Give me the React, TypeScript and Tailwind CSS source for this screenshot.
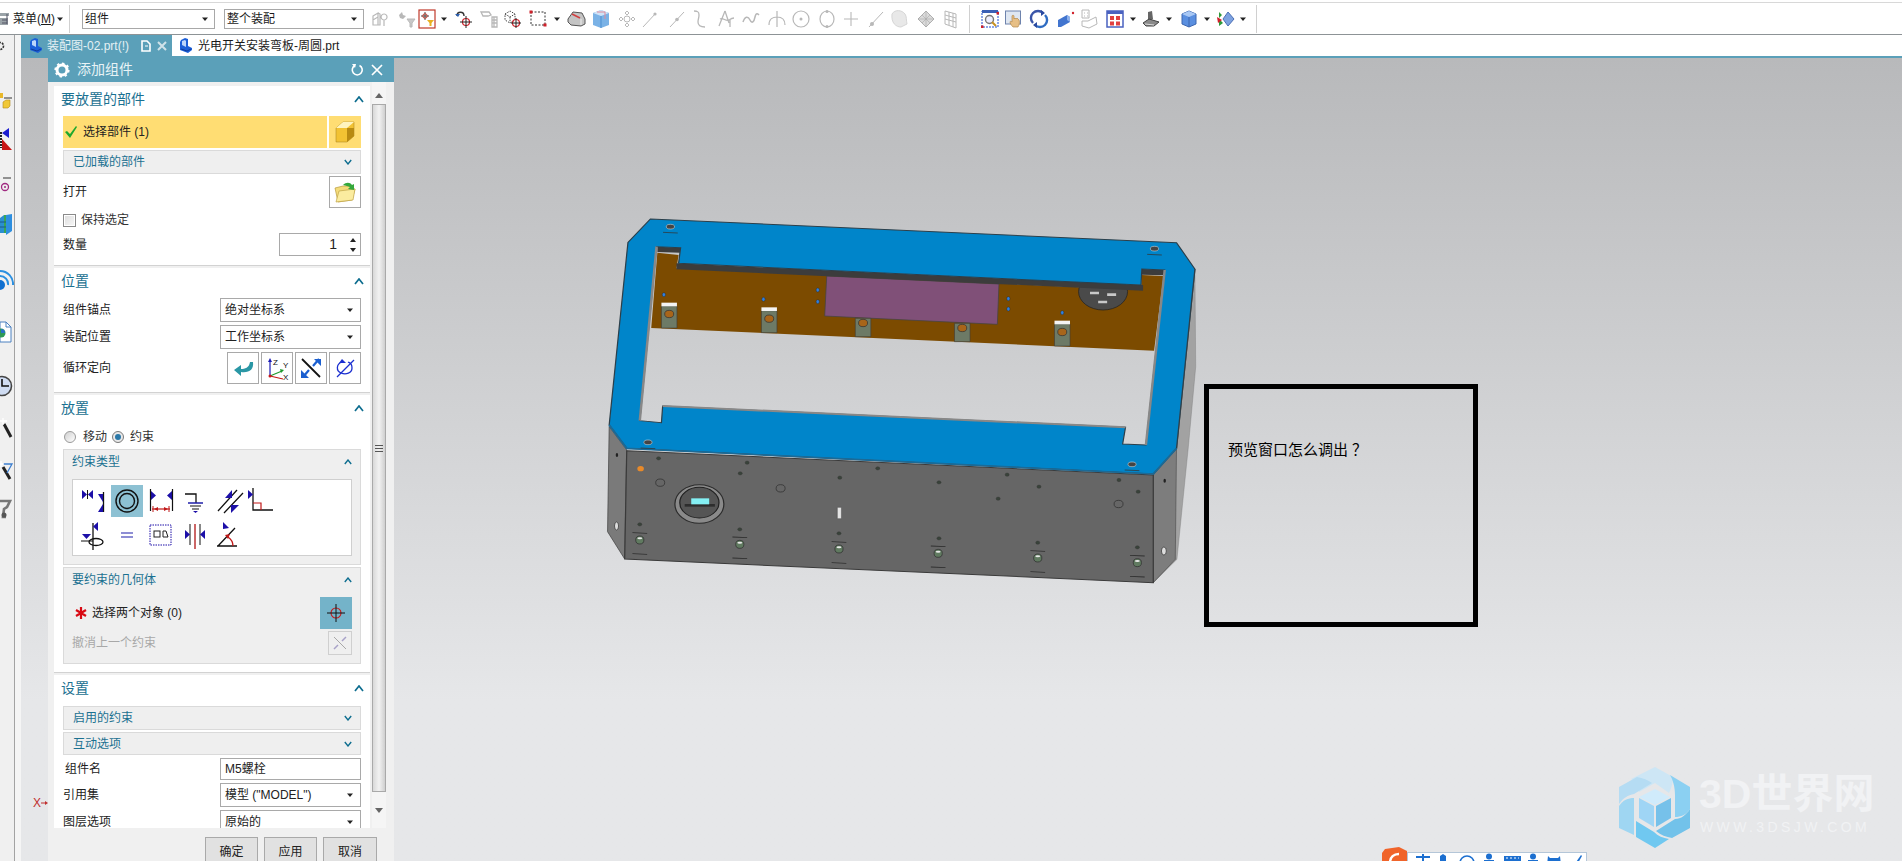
import React from "react";

const G = "#b8b8b8";
const NAVY = "#1c0fa8";

function Ic({ c, children }: { c: string; children: React.ReactNode }) {
  return (
    <svg viewBox="0 0 20 20" className={`w-[20px] h-[20px] shrink-0 ${c}`} fill="none">
      {children}
    </svg>
  );
}

function Drop({ c }: { c: string }) {
  return (
    <svg viewBox="0 0 8 8" className={`w-[8px] h-[8px] shrink-0 ${c}`}>
      <path d="M1 2.5h6L4 6z" fill="#222" />
    </svg>
  );
}

function Sep({ c }: { c: string }) {
  return <div className={`w-px h-[28px] bg-[#d0d0d0] shrink-0 ${c}`} />;
}

function Toolbar() {
  return (
    <div className="h-[32px] flex items-center border-b border-[#8d9396] shrink-0 bg-white">
      <svg viewBox="0 0 10 16" className="w-[10px] h-[16px] shrink-0">
        <path d="M0 2h9v3H0zM0 7h8v7H0z" fill="#9aa3a8" />
        <path d="M2 9h5M2 12h5M7 3v10" stroke="#556" strokeWidth="1" />
      </svg>
      <span className="ml-[3px] text-[12px] text-[#1a1a1a] w-[43px] whitespace-nowrap">
        菜单(<span className="underline">M</span>)
      </span>
      <Drop c="ml-[0px]" />
      <Sep c="ml-[5px]" />
      <div className="ml-[12px] w-[133px] h-[20px] border border-[#a8a8a8] flex items-center justify-between pl-[2px] pr-[5px] text-[12px] text-[#1a1a1a]">
        组件
        <Drop c="" />
      </div>
      <div className="ml-[9px] w-[140px] h-[20px] border border-[#a8a8a8] flex items-center justify-between pl-[2px] pr-[5px] text-[12px] text-[#1a1a1a]">
        整个装配
        <Drop c="" />
      </div>
      <Ic c="ml-[6px]">
        <path d="M3 7l5-3v4l-5 3zM3 7v9h5V8M8 4l2 1v11H8M14 5a3 3 0 1 0 .1 0zM14 11v6" stroke={G} strokeWidth="1.2" />
      </Ic>
      <Ic c="ml-[7px]">
        <path d="M2 6l3-3 1 3 3 1-3 3-3-1z" fill={G} />
        <path d="M10 10h8l-3 4v4h-2v-4z" fill="#c8c8c8" stroke={G} />
      </Ic>
      <Ic c="">
        <rect x="2" y="1" width="16" height="18" stroke="#c0392b" strokeWidth="1.2" fill="#fff" />
        <path d="M8 3v8M4 7h8" stroke="#444" />
        <circle cx="8" cy="7" r="2.2" stroke="#c0392b" />
        <path d="M10 11h7l-2.5 3v3h-2v-3z" fill="#e8b021" />
      </Ic>
      <Drop c="ml-[3px]" />
      <Ic c="ml-[6px]">
        <path d="M3 7c0-5 7-5 7 0" stroke="#333" strokeWidth="1.4" />
        <path d="M1 5l3 3 2-3z" fill="#2b5fb0" />
        <circle cx="12" cy="13" r="3.5" stroke="#d0202a" strokeWidth="1.2" />
        <path d="M12 7v12M6 13h12" stroke="#222" />
      </Ic>
      <Ic c="ml-[5px]">
        <path d="M2 3h8l2 3-3 1H4zM13 8h5v10h-5zM13 11h5M13 14h5M15 8v10" stroke={G} strokeWidth="1.3" />
      </Ic>
      <Ic c="ml-[4px]">
        <path d="M2 5l5-3 5 3v6l-5 3-5-3zM2 5l5 3 5-3M7 8v6" stroke="#444" strokeDasharray="1.5 1.2" />
        <circle cx="13" cy="14" r="3.5" stroke="#d0202a" strokeWidth="1.2" />
        <path d="M13 9v10M8 14h10" stroke="#222" />
      </Ic>
      <Ic c="ml-[5px]">
        <rect x="3" y="3" width="14" height="13" stroke="#333" strokeDasharray="2 1.5" />
        <rect x="1.5" y="1.5" width="3" height="3" fill="#d0202a" />
        <rect x="15.5" y="14.5" width="3" height="3" fill="#d0202a" />
      </Ic>
      <Drop c="ml-[5px]" />
      <Ic c="ml-[5px]">
        <path d="M2 10l5-7 9 1 3 6v5l-4 2-10-1-3-3z" fill="#c4c4c4" stroke="#555" />
        <path d="M6 5l8 4" stroke="#d04040" strokeWidth="1.6" />
        <path d="M15 10v6" stroke="#eee" />
      </Ic>
      <Ic c="ml-[5px]">
        <path d="M10 1l8 3v12l-8 3-8-3V4z" fill="#7ab2e6" />
        <path d="M10 1l8 3-8 3-8-3z" fill="#cfe3f7" />
        <path d="M10 7v12" stroke="#4d8fd0" />
        <path d="M6 3l8 0 0 7" stroke="#e08a9a" />
      </Ic>
      <Ic c="ml-[6px]">
        <path d="M10 2l2 2-2 2-2-2zM10 14l2 2-2 2-2-2zM2 10l2-2 2 2-2 2zM14 10l2-2 2 2-2 2z" stroke={G} />
        <circle cx="10" cy="10" r="3" stroke={G} />
      </Ic>
      <Ic c="ml-[3px]">
        <path d="M3 18L16 4" stroke={G} />
        <circle cx="15" cy="5" r="1.6" fill={G} />
      </Ic>
      <Ic c="ml-[7px]">
        <path d="M3 18L17 3" stroke={G} />
        <circle cx="10" cy="10.5" r="1.8" fill={G} />
      </Ic>
      <Ic c="ml-[3px]">
        <path d="M4 2c4 0 5 1 5 4s-1 4-1 7 2 5 7 5" stroke={G} strokeWidth="1.3" />
      </Ic>
      <Ic c="ml-[6px]">
        <path d="M9 2L3 17M9 2l4 12M4 10c3-2 6 3 9 1s3-2 5-2M14 10v8" stroke={G} strokeWidth="1.3" />
      </Ic>
      <Ic c="ml-[5px]">
        <path d="M2 13c2-6 5-6 7-2s4 2 5-3 3-3 4-2" stroke={G} strokeWidth="1.5" />
      </Ic>
      <Ic c="ml-[6px]">
        <path d="M10 2v16M2 16c0-6 4-8 8-8s8 2 8 8" stroke={G} strokeWidth="1.2" />
      </Ic>
      <Ic c="ml-[4px]">
        <circle cx="10" cy="10" r="8" stroke={G} strokeWidth="1.2" />
        <circle cx="10" cy="10" r="1.5" fill={G} />
      </Ic>
      <Ic c="ml-[6px]">
        <ellipse cx="10" cy="10" rx="7" ry="8" stroke={G} strokeWidth="1.2" />
        <circle cx="10" cy="2.5" r="1.5" fill={G} />
        <circle cx="10" cy="17.5" r="1.5" fill={G} />
      </Ic>
      <Ic c="ml-[4px]">
        <path d="M10 3v14M3 10h14" stroke={G} strokeWidth="1.1" />
      </Ic>
      <Ic c="ml-[5px]">
        <path d="M3 18L17 3" stroke={G} />
        <circle cx="6" cy="15" r="2" fill={G} />
      </Ic>
      <Ic c="ml-[3px]">
        <path d="M3 5c3-5 10-4 13 0 2 3 1 6 2 10l-6 3C7 18 2 14 3 5z" fill="#e8e8e8" stroke="#d6d6d6" />
      </Ic>
      <Ic c="ml-[7px]">
        <path d="M10 2l8 8-8 8-8-8z" fill="#dadada" stroke="#b0b0b0" />
        <path d="M6 6l8 8M14 6l-8 8M10 2v16M2 10h16" stroke="#aaa" strokeWidth=".6" />
      </Ic>
      <Ic c="ml-[4px]">
        <path d="M5 2l11 3v14L5 15zM5 6l11 3M5 10l11 3M9 3v13M13 4v14" stroke={G} />
      </Ic>
      <Sep c="ml-[9px]" />
      <Ic c="ml-[10px]">
        <rect x="2" y="2" width="16" height="16" stroke="#1f4fd0" strokeDasharray="2 1" />
        <rect x="2" y="1" width="16" height="3" fill="#3a5fb5" />
        <circle cx="9.5" cy="10.5" r="4" stroke="#777" strokeWidth="1.4" fill="#eef" />
        <path d="M12 13l4 4" stroke="#c89020" strokeWidth="2" />
        <rect x="16.5" y="3" width="2.5" height="2.5" fill="#d0202a" />
        <rect x="1" y="16.5" width="2.5" height="2.5" fill="#d0202a" />
      </Ic>
      <Ic c="ml-[4px]">
        <rect x="1.5" y="2" width="15" height="13" fill="#dfe7f2" stroke="#6e83ad" />
        <path d="M9 18c-2-2-3-4-3-5s1-1 2 0V7c0-1 2-1 2 0v3l1-1 1 1 1-1 1 1 1 1c1 3 0 5-1 7z" fill="#e7bf85" stroke="#b58a4d" strokeWidth=".7" />
      </Ic>
      <Ic c="ml-[5px]">
        <path d="M4 14A7 7 0 0 1 14 4" stroke="#3a55a8" strokeWidth="2.4" />
        <path d="M16 6a7 7 0 0 1-10 10" stroke="#2f6cc2" strokeWidth="2.4" />
        <path d="M12 1l4 3-4 3zM8 19l-4-3 4-3z" fill="#2a4aa0" />
      </Ic>
      <Ic c="ml-[7px]">
        <path d="M2 11l9-5 3 2v5l-9 5H2z" fill="#4275cf" />
        <path d="M11 6l3 2v5l-3-2z" fill="#8db0ea" />
        <circle cx="17" cy="4" r="1.2" fill="#d0202a" />
      </Ic>
      <Ic c="ml-[3px]">
        <path d="M3 1h7v8H3zM9 12l8-4 1 7-8 4-7-2v-5zM5 4h1M8 4h1M5 7h1M8 7h1" stroke={G} />
      </Ic>
      <Ic c="ml-[6px]">
        <rect x="2" y="2" width="16" height="16" fill="#fff" stroke="#4a62c0" strokeWidth="1.5" />
        <rect x="2" y="2" width="16" height="3" fill="#4a62c0" />
        <rect x="5" y="7" width="4" height="4" fill="#e04040" />
        <rect x="11" y="7" width="4" height="4" fill="#e04040" />
        <rect x="5" y="12.5" width="4" height="4" fill="#e04040" />
        <rect x="11" y="12.5" width="4" height="4" fill="#e04040" />
      </Ic>
      <Drop c="ml-[4px]" />
      <Ic c="ml-[4px]">
        <path d="M7 3l4-1 1 8-5 3z" fill="#666" />
        <path d="M2 14l6-4 10 3-5 4H5z" fill="#8a8a8a" stroke="#444" />
        <path d="M4 15l9 1" stroke="#ddd" />
      </Ic>
      <Drop c="ml-[4px]" />
      <Ic c="ml-[6px]">
        <path d="M10 2l7 3v10l-7 3-7-3V5z" fill="#5a8fe0" stroke="#3c66b0" />
        <path d="M3 5l7 3 7-3-7-3z" fill="#a9c8f4" />
        <path d="M10 8v10" stroke="#3c66b0" />
      </Ic>
      <Drop c="ml-[4px]" />
      <Ic c="ml-[4px]">
        <path d="M4 3v6l3-3zM4 10v7l4-3z" fill="#2d9a3a" />
        <path d="M2 8l5 3-4 3z" fill="#d0202a" />
        <path d="M13 3l6 7-6 7-5-7z" fill="#7da2e0" stroke="#4b6fb5" />
      </Ic>
      <Drop c="ml-[4px]" />
      <Sep c="ml-[9px]" />
    </div>
  );
}

function LeftStrip() {
  return (
    <div className="w-[21px] shrink-0 flex bg-[#f5f5f5]">
      <div className="w-[14px] bg-[#f0f0f0] flex flex-col overflow-hidden">
        <svg viewBox="0 0 14 24" className="w-[14px] h-[24px] shrink-0 -mt-[1px]">
          <circle cx="0" cy="12" r="3.5" fill="none" stroke="#333" strokeWidth="1.6" strokeDasharray="2 1" />
        </svg>
        <svg viewBox="0 0 14 24" className="w-[14px] h-[24px] shrink-0 mt-[33px]">
          <path d="M0 2h3v5H0z" fill="#e8b82a" />
          <path d="M4 7h8" stroke="#333" />
          <path d="M3 11l3-2h4v6l-2 2H3z" fill="#f0c838" stroke="#b38b1c" strokeWidth=".6" />
        </svg>
        <svg viewBox="0 0 14 24" className="w-[14px] h-[24px] shrink-0 mt-[12px]">
          <path d="M9 1v10L2 6z" fill="#1c1cd0" />
          <path d="M2 12v11h10z" fill="#c81414" />
          <path d="M1 5v16" stroke="#222" strokeDasharray="2 1" strokeWidth="2" />
        </svg>
        <svg viewBox="0 0 14 24" className="w-[14px] h-[24px] shrink-0 mt-[19px]">
          <path d="M3 8h8" stroke="#333" />
          <circle cx="5" cy="17" r="3.5" fill="none" stroke="#a02a80" strokeWidth="1.3" />
          <circle cx="5" cy="17" r="1" fill="#a02a80" />
        </svg>
        <svg viewBox="0 0 14 24" className="w-[14px] h-[24px] shrink-0 mt-[19px]">
          <path d="M0 5l4-3v18H0z" fill="#2b8fd0" />
          <path d="M4 2h2v18H4z" fill="#3aa655" />
          <path d="M6 2l6-1v17l-6 4z" fill="#2e8fe0" />
          <path d="M0 9h6M0 14h6" stroke="#1b5a8a" />
        </svg>
        <svg viewBox="0 0 14 24" className="w-[14px] h-[24px] shrink-0 mt-[30px]">
          <path d="M0 4a13 13 0 0 1 13 14" fill="none" stroke="#2a8fe0" strokeWidth="2" />
          <path d="M0 9a8 8 0 0 1 8 9" fill="none" stroke="#2a8fe0" strokeWidth="2" />
          <circle cx="0" cy="18" r="5" fill="#1070d0" />
        </svg>
        <svg viewBox="0 0 14 24" className="w-[14px] h-[24px] shrink-0 mt-[29px]">
          <path d="M0 2h6l5 5v15H0z" fill="#fff" stroke="#4a80c0" />
          <path d="M6 2v5h5" fill="none" stroke="#4a80c0" />
          <circle cx="1" cy="13" r="4.5" fill="#2f9a55" />
          <path d="M1 9a4 4 0 0 1 4 4H1z" fill="#2a70c8" />
        </svg>
        <svg viewBox="0 0 14 24" className="w-[14px] h-[24px] shrink-0 mt-[30px]">
          <circle cx="2" cy="12" r="9.5" fill="#cfdcf2" stroke="#444" strokeWidth="1.6" />
          <path d="M2 5v7h7" fill="none" stroke="#111" strokeWidth="1.6" />
        </svg>
        <svg viewBox="0 0 14 24" className="w-[14px] h-[24px] shrink-0 mt-[18px]">
          <path d="M4 8l7 13" stroke="#222" strokeWidth="3" />
          <path d="M3 2v7M0 5h7" stroke="#fff" strokeWidth="1.3" />
        </svg>
        <svg viewBox="0 0 14 24" className="w-[14px] h-[24px] shrink-0 mt-[18px]">
          <path d="M3 9l7 12" stroke="#222" strokeWidth="3" />
          <path d="M3 6h9l-5 9" fill="none" stroke="#3c7fd0" strokeWidth="1.3" />
          <path d="M1 3v6M0 6h4" stroke="#fff" strokeWidth="1.3" />
        </svg>
        <svg viewBox="0 0 14 24" className="w-[14px] h-[24px] shrink-0 mt-[15px]">
          <path d="M0 4l10 0-3 6-3 2-1 8 3 0" fill="none" stroke="#777" strokeWidth="2.6" />
          <circle cx="4" cy="18" r="2.500" fill="#555" />
        </svg>
      </div>
      <div className="w-px bg-[#a3a3a3]" />
    </div>
  );
}

function NxMark({ c }: { c: string }) {
  return (
    <svg viewBox="0 0 14 15" className={`w-[14px] h-[15px] shrink-0 ${c}`}>
      <path d="M2 2l4-2 3 1v7l4 2v2l-4 3-8-3V4z" fill="#1c5fd8" />
      <path d="M3 3l3-1 1 1v6l-4-2z" fill="#bcd6fb" />
      <path d="M2 11l6 2 4-2" fill="none" stroke="#0f3c9a" />
    </svg>
  );
}

function Tabs() {
  return (
    <div className="h-[23px] shrink-0 bg-white flex flex-col">
      <div className="h-[21px] flex items-center text-[12px] whitespace-nowrap">
        <div className="w-[151px] h-full bg-[#5ba0b9] flex items-center text-[#e4f0f4]">
          <NxMark c="ml-[8px]" />
          <span className="ml-[4px] w-[90px]">装配图-02.prt(!)</span>
          <svg viewBox="0 0 12 12" className="w-[12px] h-[12px] ml-[3px]">
            <path d="M2 1h5l3 3v7H2z" fill="none" stroke="#fff" strokeWidth="1.6" />
            <path d="M5 6h3" stroke="#fff" />
          </svg>
          <svg viewBox="0 0 10 10" className="w-[10px] h-[10px] ml-[5px]">
            <path d="M1 1l8 8M9 1l-8 8" stroke="#cfe2e9" strokeWidth="2" />
          </svg>
        </div>
        <NxMark c="ml-[7px]" />
        <span className="ml-[5px] text-[#1a1a1a]">光电开关安装弯板-周圆.prt</span>
      </div>
      <div className="h-[2px] bg-[#5ba0b9]" />
    </div>
  );
}

function Chev({ down, small }: { down?: boolean; small?: boolean }) {
  return (
    <svg viewBox="0 0 10 7" className={small ? "w-[8px] h-[6px] shrink-0" : "w-[10px] h-[7px] shrink-0"}>
      <path d={down ? "M1 1l4 5 4-5" : "M1 6l4-5 4 5"} fill="none" stroke="#0d6d8f" strokeWidth="1.7" />
    </svg>
  );
}

function SecHead({ t }: { t: string }) {
  return (
    <div className="h-[26px] flex items-center justify-between -ml-[2px] pr-[2px] -mr-[5px] text-[14px] text-[#1b7191] shrink-0">
      {t}
      <Chev />
    </div>
  );
}

function Sub({ t, c, down = true }: { t: string; c: string; down?: boolean }) {
  return (
    <div className={`border border-[#dadada] bg-[#efefef] flex items-center justify-between pl-[9px] pr-[8px] text-[12px] text-[#1b7191] ${c}`}>
      {t}
      <Chev small down={down} />
    </div>
  );
}

function Sel({ t, c }: { t: string; c: string }) {
  return (
    <div className={`w-[141px] border border-[#a9a9a9] bg-white flex items-center justify-between pl-[4px] pr-[6px] text-[12px] text-[#222] shrink-0 ${c}`}>
      <span className="whitespace-nowrap">{t}</span>
      <Drop c="" />
    </div>
  );
}

function Row({ l, c, children }: { l: string; c: string; children: React.ReactNode }) {
  return (
    <div className={`flex items-center justify-between text-[12px] text-[#222] ${c}`}>
      <span className="whitespace-nowrap">{l}</span>
      {children}
    </div>
  );
}

function OBtn({ children }: { children: React.ReactNode }) {
  return (
    <div className="w-[32px] h-[32px] border border-[#a9a9a9] bg-white flex items-center justify-center">
      <svg viewBox="0 0 24 24" className="w-[24px] h-[24px]" fill="none">
        {children}
      </svg>
    </div>
  );
}

function CCell({ on, children }: { on?: boolean; children: React.ReactNode }) {
  return (
    <div className="w-[34px] h-[32px] flex justify-center">
      <div className={on ? "w-[32px] h-[32px] bg-[#8dc1d3]" : "w-[32px] h-[32px]"}>
        <svg viewBox="0 0 32 32" className="w-[32px] h-[32px]" fill="none">
          {children}
        </svg>
      </div>
    </div>
  );
}

function ConstraintGrid() {
  return (
    <div className="mt-[5px] mx-[8px] h-[77px] border border-[#cfcfcf] bg-white pl-[3px] pt-[5px] flex flex-col gap-[2px]">
      <div className="flex">
        <CCell>
          <path d="M5 5v9l5-4.5zM16 5v9l-5-4.5z" fill={NAVY} />
          <path d="M10.500 5v9" stroke="#111" />
          <path d="M26.500 7v20" stroke="#111" strokeWidth="1.300" />
          <path d="M21 9h5v8zM21 27h5v-8z" fill={NAVY} />
        </CCell>
        <CCell on>
          <circle cx="16" cy="16" r="11" stroke="#111" strokeWidth="1.400" />
          <circle cx="16" cy="16" r="7.500" stroke="#111" strokeWidth="1.400" />
        </CCell>
        <CCell>
          <path d="M6 6v9l5-4.500zM27 6v9l-5-4.500z" fill={NAVY} />
          <path d="M5.500 4v22M27.500 4v22" stroke="#111" strokeWidth="1.200" />
          <path d="M7 24h18" stroke="#c01818" strokeWidth="1.200" />
          <path d="M9 24l4-2v4zM23 24l-4-2v4z" fill="#c01818" />
          <path d="M8 21v6M24 21v6" stroke="#c01818" />
        </CCell>
        <CCell>
          <path d="M6 9h11v9" stroke="#111" strokeWidth="1.300" />
          <path d="M9 18h15" stroke="#1f1faa" strokeWidth="1.500" />
          <path d="M11 21h11M13 24h7" stroke="#111" strokeWidth="1.200" />
          <path d="M14 26h5l-2.500 2z" fill={NAVY} />
        </CCell>
        <CCell>
          <path d="M5 26L24 5M11 28L30 8" stroke="#111" strokeWidth="1.300" />
          <path d="M12 13l7-8v8z" fill={NAVY} />
          <path d="M18 20h8l-8 8z" fill={NAVY} />
        </CCell>
        <CCell>
          <path d="M6 3v22h20" stroke="#111" strokeWidth="1.300" />
          <path d="M1 5v9l5-4.500z" fill={NAVY} />
          <path d="M6 18h8v7" stroke="#c01818" strokeWidth="1.200" />
        </CCell>
      </div>
      <div className="flex">
        <CCell>
          <path d="M16 4v27" stroke="#111" strokeWidth="1.300" />
          <path d="M21 3v9l-5-4.500z" fill={NAVY} />
          <path d="M5 15h9l-4.500 5z" fill={NAVY} />
          <path d="M4 22h12" stroke="#111" />
          <ellipse cx="19" cy="23" rx="7" ry="3.500" stroke="#111" strokeWidth="1.300" />
        </CCell>
        <CCell>
          <path d="M10 14h12M10 18h12" stroke="#1f1faa" strokeWidth="1.200" />
        </CCell>
        <CCell>
          <rect x="5" y="6" width="21" height="20" stroke={NAVY} strokeDasharray="1.500 1" />
          <rect x="9" y="12" width="6" height="6" stroke="#222" />
          <path d="M18 12h3l2 6h-5z" stroke="#222" />
        </CCell>
        <CCell>
          <path d="M16 5v25" stroke="#b01414" strokeWidth="1.300" />
          <path d="M11 5v21M21 5v21" stroke="#111" />
          <path d="M6 11v9l5-4.500zM26 11v9l-5-4.500z" fill={NAVY} />
        </CCell>
        <CCell>
          <path d="M4 27h20M5 27L22 9" stroke="#111" strokeWidth="1.300" />
          <path d="M10 3v7l6-1z" fill={NAVY} />
          <path d="M20 27c0-4-2-7-5-9" stroke="#c01818" strokeWidth="1.300" />
          <path d="M12 16l5-1-2 5z" fill="#c01818" />
        </CCell>
      </div>
    </div>
  );
}

function Scrollbar() {
  return (
    <div className="ml-[2px] w-[14px] flex flex-col shrink-0 bg-[#f5f5f5]">
      <div className="h-[22px] flex items-center justify-center pt-[4px]">
        <svg viewBox="0 0 8 5" className="w-[8px] h-[5px]">
          <path d="M0 5h8L4 0z" fill="#666" />
        </svg>
      </div>
      <div className="h-[688px] border border-[#a9a9a9] bg-linear-to-r from-[#d8d8d8] via-[#f2f2f2] to-[#cfcfcf] flex flex-col items-center justify-center gap-[2px]">
        <div className="w-[8px] h-px bg-[#555]" />
        <div className="w-[8px] h-px bg-[#555]" />
        <div className="w-[8px] h-px bg-[#555]" />
      </div>
      <div className="flex-1 flex items-center justify-center">
        <svg viewBox="0 0 8 5" className="w-[8px] h-[5px]">
          <path d="M0 0h8L4 5z" fill="#666" />
        </svg>
      </div>
    </div>
  );
}

function Dialog() {
  return (
    <div className="absolute left-[27px] -top-[1px] w-[346px] h-[804px] flex flex-col bg-[#f0f0f0] overflow-hidden">
      <div className="h-[25px] bg-[#5ba0b9] flex items-center text-white shrink-0">
        <svg viewBox="0 0 16 16" className="w-[16px] h-[16px] ml-[6px]">
          <circle cx="8" cy="8" r="5" fill="none" stroke="#fff" strokeWidth="3" />
          <circle cx="8" cy="8" r="6.800" fill="none" stroke="#fff" strokeWidth="1.600" strokeDasharray="2.500 2.800" />
        </svg>
        <span className="ml-[7px] text-[14px] text-[#e8f3f6]">添加组件</span>
        <svg viewBox="0 0 14 14" className="w-[14px] h-[14px] ml-[217px]" fill="none">
          <path d="M5 2.500A5 5 0 1 0 9.500 2.500" stroke="#fff" strokeWidth="1.600" />
          <path d="M2 1l4 0-1 4z" fill="#fff" />
        </svg>
        <svg viewBox="0 0 14 14" className="w-[14px] h-[14px] ml-[6px]">
          <path d="M2 2l10 10M12 2L2 12" stroke="#fff" strokeWidth="1.700" />
        </svg>
      </div>
      <div className="flex h-[746px] pl-[6px] shrink-0">
        <div className="w-[316px] shrink-0 pt-[4px] overflow-hidden flex flex-col">
          <section className="bg-white px-[9px] pb-[9px] border-b border-[#d2d2d2] shrink-0">
            <SecHead t="要放置的部件" />
            <div className="mt-[4px] h-[32px] flex gap-[2px]">
              <div className="w-[264px] bg-[#ffdd73] flex items-center text-[12px] text-[#222]">
                <svg viewBox="0 0 14 14" className="w-[14px] h-[14px] ml-[1px]">
                  <path d="M1 7l2-1 3 3 6-8 1 1-7 11z" fill="#1fa82e" />
                </svg>
                <span className="ml-[5px]">选择部件 (1)</span>
              </div>
              <div className="w-[32px] bg-[#ffdd73] flex items-center justify-center">
                <svg viewBox="0 0 20 22" className="w-[20px] h-[22px]">
                  <path d="M1 7l7-6h11v14l-7 6H1z" fill="#f2c233" stroke="#a07d1c" strokeWidth=".5" />
                  <path d="M1 7l7-6h11l-7 6z" fill="#fff4bf" />
                  <path d="M12 7h7v8l-7 6z" fill="#b88a12" />
                </svg>
              </div>
            </div>
            <Sub t="已加载的部件" c="mt-[2px] h-[24px]" />
            <Row l="打开" c="mt-[2px] h-[32px]">
              <OBtn>
                <path d="M2 8l8-2 9 0 1 3 2 0-3 11-14 2z" fill="#f4dc7a" stroke="#b79a3b" strokeWidth=".7" />
                <path d="M3 22l3-11 16-2-2 11z" fill="#fbec9f" stroke="#c0a445" strokeWidth=".7" />
                <path d="M10 5c3-3 7-3 9 0l2-1v6l-6-1 2-2c-2-1-4-1-7-2z" fill="#35a83c" />
              </OBtn>
            </Row>
            <div className="mt-[4px] h-[16px] flex items-center text-[12px] text-[#333]">
              <div className="w-[13px] h-[13px] border border-[#8a8a8a] bg-linear-to-br from-[#dcdcdc] to-[#f8f8f8] shadow-[inset_0_0_0_1px_#fff]" />
              <span className="ml-[5px]">保持选定</span>
            </div>
            <Row l="数量" c="mt-[5px] h-[23px]">
              <div className="w-[82px] h-[23px] border border-[#a9a9a9] flex items-center justify-end pr-[4px] text-[14px]">
                1
                <div className="ml-[13px] flex flex-col gap-[6px]">
                  <svg viewBox="0 0 6 4" className="w-[6px] h-[4px]">
                    <path d="M0 4h6L3 0z" fill="#222" />
                  </svg>
                  <svg viewBox="0 0 6 4" className="w-[6px] h-[4px]">
                    <path d="M0 0h6L3 4z" fill="#222" />
                  </svg>
                </div>
              </div>
            </Row>
          </section>
          <section className="mt-[2px] bg-white px-[9px] pb-[8px] border-b border-[#d2d2d2] shrink-0">
            <SecHead t="位置" />
            <Row l="组件锚点" c="mt-[4px] h-[24px]">
              <Sel t="绝对坐标系" c="h-[24px]" />
            </Row>
            <Row l="装配位置" c="mt-[3px] h-[24px]">
              <Sel t="工作坐标系" c="h-[24px]" />
            </Row>
            <Row l="循环定向" c="mt-[3px] h-[32px]">
              <div className="flex gap-[2px]">
                <OBtn>
                  <path d="M22 6c1 8-4 11-12 10v4L3 14l7-5v4c4 0 8-1 9-7z" fill="#2a97a5" />
                </OBtn>
                <OBtn>
                  <path d="M5 20V4" stroke="#1b1bb5" strokeWidth="1.200" />
                  <path d="M3 6l2-4 2 4z" fill="#1b1bb5" />
                  <path d="M5 20l12-5" stroke="#1f9a2f" strokeWidth="1.200" />
                  <path d="M15 13l4 1-3 3z" fill="#1f9a2f" />
                  <path d="M5 20l13 3" stroke="#c81818" strokeWidth="1.200" />
                  <circle cx="5" cy="20" r="1.500" fill="#c81818" />
                  <text x="8" y="9" fontSize="8" fill="#111" fontFamily="Liberation Sans">Z</text>
                  <text x="18" y="12" fontSize="8" fill="#111" fontFamily="Liberation Sans">Y</text>
                  <text x="18" y="24" fontSize="8" fill="#111" fontFamily="Liberation Sans">X</text>
                </OBtn>
                <OBtn>
                  <path d="M3 3l18 18" stroke="#111" strokeWidth="1.800" />
                  <path d="M14 10l6-7M10 14l-6 7" stroke="#1b5fd0" strokeWidth="2.200" />
                  <path d="M15 3h7v7zM2 14v8h8z" fill="#1b5fd0" />
                </OBtn>
                <OBtn>
                  <path d="M4 21L21 4" stroke="#1b2fd0" strokeWidth="1.300" />
                  <path d="M9 6c-6 2-6 9-1 11s11 0 11-5-2-5-4-6" stroke="#1b2fd0" strokeWidth="1.300" />
                  <path d="M9 3l4 4H6z" fill="#1b2fd0" />
                </OBtn>
              </div>
            </Row>
          </section>
          <section className="mt-[2px] bg-white px-[9px] pb-[8px] border-b border-[#d2d2d2] shrink-0">
            <SecHead t="放置" />
            <div className="mt-[8px] h-[16px] flex items-center text-[12px] text-[#333] pl-[1px]">
              <div className="w-[12px] h-[12px] rounded-full border border-[#9a9a9a] bg-linear-to-br from-[#d0d0d0] to-white" />
              <span className="ml-[7px]">移动</span>
              <div className="ml-[5px] w-[12px] h-[12px] rounded-full border border-[#7a7a7a] bg-[#e8e8e8] flex items-center justify-center">
                <div className="w-[6px] h-[6px] rounded-full bg-[#2a78a8]" />
              </div>
              <span className="ml-[6px]">约束</span>
            </div>
            <div className="mt-[4px] h-[116px] border border-[#dadada] bg-[#efefef]">
              <div className="h-[24px] flex items-center justify-between pl-[8px] pr-[8px] text-[12px] text-[#1b7191]">
                约束类型
                <Chev small />
              </div>
              <ConstraintGrid />
            </div>
            <div className="mt-[2px] h-[97px] border border-[#dadada] bg-[#efefef]">
              <div className="h-[23px] flex items-center justify-between pl-[8px] pr-[8px] text-[12px] text-[#1b7191]">
                要约束的几何体
                <Chev small />
              </div>
              <div className="mt-[6px] h-[32px] flex items-center justify-between pr-[8px] text-[12px] text-[#222]">
                <div className="flex items-center">
                  <svg viewBox="0 0 12 12" className="w-[12px] h-[12px] ml-[11px]">
                    <path d="M6 0v12M1 3l10 6M11 3L1 9" stroke="#d80a14" strokeWidth="2.200" />
                  </svg>
                  <span className="ml-[5px]">选择两个对象 (0)</span>
                </div>
                <div className="w-[32px] h-[32px] bg-[#74b3c9] flex items-center justify-center">
                  <svg viewBox="0 0 20 20" className="w-[20px] h-[20px]" fill="none">
                    <circle cx="10" cy="10" r="5" stroke="#c81818" strokeWidth="1.100" />
                    <path d="M10 1v18M1 10h18" stroke="#111" />
                  </svg>
                </div>
              </div>
              <div className="mt-[2px] h-[24px] flex items-center justify-between pl-[8px] pr-[8px] text-[12px] text-[#a8a8a8]">
                撤消上一个约束
                <div className="w-[24px] h-[24px] border border-[#cfcfcf] flex items-center justify-center">
                  <svg viewBox="0 0 16 16" className="w-[16px] h-[16px]" fill="none">
                    <path d="M2 2l12 12" stroke="#a8a8a8" />
                    <path d="M10 6l4-4M6 10l-4 4" stroke="#a8a2c8" strokeWidth="1.500" />
                  </svg>
                </div>
              </div>
            </div>
          </section>
          <section className="mt-[2px] bg-white px-[9px] pb-[8px] shrink-0">
            <SecHead t="设置" />
            <Sub t="启用的约束" c="mt-[5px] h-[24px]" />
            <Sub t="互动选项" c="mt-[2px] h-[23px]" />
            <Row l="组件名" c="mt-[3px] h-[22px] pl-[2px]">
              <div className="w-[141px] h-[22px] border border-[#a9a9a9] flex items-center pl-[4px]">M5螺栓</div>
            </Row>
            <Row l="引用集" c="mt-[3px] h-[24px]">
              <Sel t={'模型 ("MODEL")'} c="h-[24px]" />
            </Row>
            <Row l="图层选项" c="mt-[3px] h-[24px]">
              <Sel t="原始的" c="h-[24px]" />
            </Row>
          </section>
        </div>
        <Scrollbar />
      </div>
      <div className="flex-1 flex justify-end gap-[6px] pt-[9px] pr-[17px] text-[12px] text-[#222]">
        <div className="w-[53px] h-[30px] border border-[#a9a9a9] bg-[#e1e1e1] flex items-center justify-center">确定</div>
        <div className="w-[53px] h-[30px] border border-[#a9a9a9] bg-[#e1e1e1] flex items-center justify-center">应用</div>
        <div className="w-[54px] h-[30px] border border-[#a9a9a9] bg-[#e1e1e1] flex items-center justify-center">取消</div>
      </div>
    </div>
  );
}

function Model() {
  const holes = [
    [168, 775], [385, 788], [368, 820], [705, 805], [612, 833], [855, 847], [1022, 824],
    [1100, 860], [1296, 840], [1343, 875], [1000, 896], [122, 973], [367, 988], [610, 1000],
    [855, 1015], [1097, 1028], [1341, 1042],
  ];
  const rings = [[172, 848], [467, 865], [1295, 912]];
  const bolts = [[122, 1020], [367, 1033], [610, 1047], [853, 1060], [1097, 1074], [1341, 1088]];
  const brackets = [
    [175, 318, true], [420, 332, true], [650, 355, false], [893, 370, false], [1138, 372, true],
  ] as [number, number, boolean][];
  const dots = [[181, 284], [425, 298], [558, 270], [558, 305], [1025, 296], [1025, 327], [1157, 338]];
  const topHoles = [[197, 80], [1383, 146], [142, 727], [1328, 793]];
  return (
    <svg viewBox="0 0 1568 1200" preserveAspectRatio="none" className="absolute left-[569px] top-[142px] w-[640px] h-[400px]">
      <path d="M1482 207L1484 500L1466 740L1438 1078L1380 1148V825L1437 745z" fill="#a2a2a2" stroke="#777" strokeWidth="1" />
      <path d="M1380 825L1437 745L1434 1078L1380 1148z" fill="#7d7d7d" stroke="#444" strokeWidth="1.500" />
      <path d="M1482 207L1437 745" stroke="#555" strokeWidth="3" />
      <path d="M47 680L90 750L85 1077L43 995z" fill="#7a7a7a" stroke="#444" strokeWidth="2" />
      <path d="M90 752L1380 825V1148L85 1077z" fill="#666666" stroke="#3a3a3a" strokeWidth="3" />
      <path d="M165 158L217 165L212 205L1350 270L1352 225L1405 228L1382 452L150 384z" fill="#7c4b00" />
      <path d="M580 228L1002 252L998 373L575 348z" fill="#805078" stroke="#444" strokeWidth="2" />
      {brackets.map(([x, y, w]) => (
        <g key={x}>
          <path d={`M${x} ${y}h38v${w ? 66 : 55}h-38z`} fill="#6d7a66" stroke="#3a3a3a" strokeWidth="1.500" />
          {w && <path d={`M${x} ${y - 10}h38v11h-38z`} fill="#f4f4f4" />}
          <ellipse cx={x + 19} cy={y + (w ? 24 : 14)} rx="11" ry="11" fill="#a8651a" stroke="#333" strokeWidth="2" />
        </g>
      ))}
      {dots.map(([x, y]) => (
        <ellipse key={`${x}-${y}`} cx={x} cy={y} rx="4" ry="6" fill="#2f7fe0" stroke="#222" strokeWidth="1" />
      ))}
      <ellipse cx="1257" cy="275" rx="60" ry="55" fill="#4a4a4a" stroke="#222" strokeWidth="2" />
      <path d="M1225 275h22v8h-22zM1267 280h22v8h-22zM1245 302h22v8h-22z" fill="#c8c8c8" />
      <path d="M212 190L1355 255V272L212 208z" fill="#3c3c3c" />
      <path d="M165 140L222 143V158L165 156zM1352 207L1408 210V226L1352 224z" fill="#3c3c3c" />
      <path
        fillRule="evenodd"
        d="M148 57L1437 128L1482 207L1437 745L1380 822L90 745L47 675L93 127zM163 140L222 143L217 190L1350 255L1352 207L1408 210L1362 735L1305 732L1312 682L178 618L175 668L122 662z"
        fill="#0085ca"
        stroke="#2c3f4a"
        strokeWidth="3"
      />
      <path d="M122 662L163 140M178 618L1312 682M1362 735L1408 210" stroke="#888" strokeWidth="6" />
      <path d="M47 675L90 745L1380 822L1437 745" fill="none" stroke="#1c6a96" strokeWidth="5" />
      {topHoles.map(([x, y]) => (
        <g key={x}>
          <ellipse cx={x} cy={y} rx="10" ry="7" fill="#444" stroke="#ddd" strokeWidth="1.500" />
          <path d={`M${x - 18} ${y + 17}l36 2`} stroke="#333" strokeWidth="2" />
        </g>
      ))}
      {holes.map(([x, y]) => (
        <ellipse key={`${x}-${y}`} cx={x} cy={y} rx="5" ry="5" fill="#39433a" stroke="#333" strokeWidth="1" />
      ))}
      {rings.map(([x, y]) => (
        <ellipse key={x} cx={x} cy={y} rx="11" ry="11" fill="none" stroke="#2e2e2e" strokeWidth="2" />
      ))}
      {bolts.map(([x, y]) => (
        <g key={x}>
          <path d={`M${x - 18} ${y - 22}l36 2M${x - 18} ${y + 41}l36 2`} stroke="#2e2e2e" strokeWidth="2.500" />
          <ellipse cx={x} cy={y} rx="10" ry="12" fill="#607a60" stroke="#2e2e2e" strokeWidth="2" />
          <ellipse cx={x} cy={y - 5} rx="6" ry="3" fill="#e8e8e8" />
        </g>
      ))}
      <ellipse cx="268" cy="912" rx="60" ry="58" fill="#8a8a8a" stroke="#2c2c2c" strokeWidth="3" />
      <ellipse cx="268" cy="908" rx="48" ry="46" fill="#555" stroke="#222" strokeWidth="3" />
      <path d="M232 912h74v8h-74z" fill="#2d2d2d" />
      <path d="M248 895h44v18h-44z" fill="#84f0f4" />
      <path d="M606 922h10v34h-10z" fill="#e4e4e4" stroke="#333" strokeWidth="1" />
      <ellipse cx="124" cy="806" rx="8" ry="8" fill="#e88a2a" />
      <ellipse cx="65" cy="978" rx="5" ry="12" fill="#ddd" stroke="#333" strokeWidth="2" />
      <ellipse cx="66" cy="765" rx="3" ry="6" fill="#222" />
      <ellipse cx="1406" cy="1053" rx="6" ry="12" fill="#ddd" stroke="#333" strokeWidth="2" />
      <ellipse cx="1408" cy="842" rx="3" ry="6" fill="#222" />
    </svg>
  );
}

function Logo() {
  return (
    <div className="absolute left-[1598px] top-[709px] flex">
      <svg viewBox="0 0 72 82" className="w-[72px] h-[82px] shrink-0">
        <path d="M36 0L54 10C54 16 52 22 50 26L36 16 20 25C18 18 14 13 12 12z" fill="#cde6f5" />
        <path d="M51 8L71 20V42C67 48 62 50 56 50V28C56 20 54 13 51 8z" fill="#8bd0f2" />
        <path d="M71 42V61L53 71C47 70 42 68 37 64L56 52C62 52 67 48 71 42z" fill="#72c2ea" />
        <path d="M50 72L36 81 17 70C17 63 17 59 17 54L35 65C39 69 44 71 50 72z" fill="#70c8f0" />
        <path d="M15 68L0 61V39C4 33 9 31 15 31V53C15 58 15 63 15 68z" fill="#9fd6f2" />
        <path d="M0 37V20L18 10C24 11 29 13 33 16L15 27C9 28 4 31 0 37z" fill="#b5dcf3" />
        <path d="M36 22L51 30 36 38 20 30z" fill="#d0ebfb" />
        <path d="M20 31L35 39V60L20 51z" fill="#9fd5f5" />
        <path d="M52 31L37 39V60L52 51z" fill="#76c1ea" />
      </svg>
      <div className="ml-[8px] flex flex-col text-[#f1f2f4] font-bold">
        <div className="text-[41px] leading-[44px] mt-[5px] font-['Liberation_Sans','Noto_Sans_CJK_SC',sans-serif] whitespace-nowrap">3D世界网</div>
        <div className="text-[14px] leading-[14px] mt-[4px] ml-[1px] tracking-[3.4px] font-['Liberation_Sans',sans-serif] font-normal whitespace-nowrap">WWW.3DSJW.COM</div>
      </div>
    </div>
  );
}

function ImeBar() {
  return (
    <div className="absolute left-[1361px] top-[789px] flex items-start">
      <svg viewBox="0 0 25 16" className="w-[25px] h-[16px] shrink-0">
        <path d="M3 2l14-2 8 4v12H0V6z" fill="#f0642a" />
        <path d="M8 16c0-6 4-9 9-9" fill="none" stroke="#fff" strokeWidth="2.500" />
      </svg>
      <div className="mt-[5px] w-[180px] h-[12px] bg-white border border-[#b4c6d8] shrink-0 overflow-hidden">
        <svg viewBox="0 0 180 12" className="w-[180px] h-[12px]">
          <path d="M8 4h14M15 1v11" stroke="#1c6fd0" strokeWidth="2" />
          <path d="M32 3l3-2 3 2v9h-6z" fill="#1c6fd0" />
          <circle cx="59" cy="10" r="7" fill="none" stroke="#1c6fd0" strokeWidth="1.600" />
          <circle cx="81" cy="3.500" r="3" fill="#1c6fd0" />
          <path d="M76 12h10V7H76z" fill="#1c6fd0" />
          <path d="M96 3h17v9H96z" fill="#1c6fd0" />
          <path d="M98 5h2M102 5h2M106 5h2M110 5h1" stroke="#fff" />
          <circle cx="125" cy="3.500" r="3" fill="#1c6fd0" />
          <path d="M120 12h10V7h-10z" fill="#1c6fd0" />
          <path d="M140 3l2 2h8l2-2 1 9h-14z" fill="#1c6fd0" />
          <path d="M166 12l7-10 1 1-5 9z" fill="#1c6fd0" />
        </svg>
      </div>
    </div>
  );
}

export default function App() {
  return (
    <div className="w-[1902px] h-[861px] overflow-hidden flex flex-col bg-white font-['Liberation_Sans','Noto_Sans_CJK_SC',sans-serif]">
      <div className="h-[3px] bg-white border-b border-[#d8d8d8] shrink-0" />
      <Toolbar />
      <div className="flex-1 flex min-h-0">
        <LeftStrip />
        <div className="flex-1 flex flex-col min-w-0">
          <Tabs />
          <main className="relative flex-1 overflow-hidden bg-linear-to-b from-[#b8b9bb] to-[#e6e7e9] to-80%">
            <Model />
            <div className="absolute left-[1183px] top-[326px] w-[274px] h-[243px] border-[5px] border-black pl-[19px] pt-[51px] text-[15px] leading-[20px] text-black">
              预览窗口怎么调出<span className="ml-[4px]">？</span>
            </div>
            <Logo />
            <ImeBar />
            <div className="absolute left-[12px] top-[738px] flex items-center text-[12px] text-[#c03030] leading-[14px]">
              X
              <svg viewBox="0 0 7 6" className="w-[7px] h-[6px]">
                <path d="M0 2.500h4V1l3 2-3 2V3.500H0z" fill="#c03030" />
              </svg>
            </div>
            <Dialog />
          </main>
        </div>
      </div>
    </div>
  );
}
